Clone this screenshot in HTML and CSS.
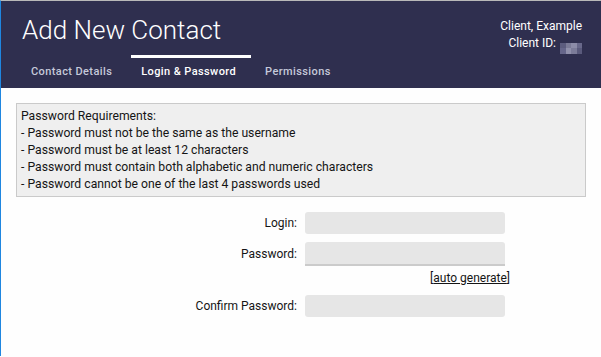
FILE: index.html
```html
<!DOCTYPE html>
<html lang="en">
<head>
  <meta charset="UTF-8">
  <title>Add New Contact</title>
  <link rel="stylesheet" href="styles.css">
</head>
<body>
  <header class="page-header">
    <div class="header-top">
      <h1>Add New Contact</h1>
      <div class="client-info">
        <div>Client, Example</div>
        <div>Client ID: <span class="blurred"><i></i><i></i><i></i><i></i><i></i><i></i><i></i><i></i></span></div>
      </div>
    </div>
    <nav class="tabs">
      <a class="tab">Contact Details</a>
      <a class="tab active">Login &amp; Password</a>
      <a class="tab">Permissions</a>
    </nav>
  </header>

  <div class="content">
    <div class="requirements">
      <div>Password Requirements:</div>
      <div>- Password must not be the same as the username</div>
      <div>- Password must be at least 12 characters</div>
      <div>- Password must contain both alphabetic and numeric characters</div>
      <div>- Password cannot be one of the last 4 passwords used</div>
    </div>

    <form class="login-form">
      <div class="row">
        <label for="login">Login:</label>
        <input type="text" id="login">
      </div>
      <div class="row row-tight">
        <label for="password">Password:</label>
        <input type="password" id="password" class="with-bar">
      </div>
      <div class="auto-row">[<a href="#">auto generate</a>]</div>
      <div class="row">
        <label for="confirm">Confirm Password:</label>
        <input type="password" id="confirm">
      </div>
    </form>
  </div>
</body>
</html>
```

FILE: styles.css
```css
body {
  margin: 0;
  border-top: 1px solid #b9b9b9;
  border-left: 1px solid #1f86e0;
  min-height: 356px;
  box-sizing: border-box;
  background: #fefefe;
  font-family: Roboto, 'Liberation Sans', sans-serif;
  color: #1c1c1c;
}

.page-header {
  background: #2f2f4f;
  height: 87px;
  box-sizing: border-box;
  padding-top: 13px;
}

.header-top {
  display: flex;
  justify-content: space-between;
  align-items: flex-start;
  height: 32px;
  padding: 0 19px 0 21px;
}

.header-top h1 {
  margin: 0;
  font-size: 26px;
  line-height: 32px;
  font-weight: 300;
  color: #fff;
}

.client-info {
  margin-top: 4px;
  text-align: right;
  font-size: 12px;
  line-height: 17px;
  color: #fff;
}

.blurred {
  display: inline-grid;
  grid-template-columns: repeat(4, 5.5px);
  grid-template-rows: repeat(2, 5.5px);
  vertical-align: -1px;
  margin-left: 1px;
}

.blurred i:nth-child(1) { background: #5c5c7e; }
.blurred i:nth-child(2) { background: #7a7a96; }
.blurred i:nth-child(3) { background: #8c8ca8; }
.blurred i:nth-child(4) { background: #68688a; }
.blurred i:nth-child(5) { background: #66668a; }
.blurred i:nth-child(6) { background: #9090ab; }
.blurred i:nth-child(7) { background: #7c7c99; }
.blurred i:nth-child(8) { background: #5a5a7c; }

.tabs {
  display: flex;
  gap: 4px;
  margin-top: 9px;
  padding-left: 20px;
}

.tab {
  padding: 7px 15px 9px 10px;
  border-top: 3px solid transparent;
  font-size: 11px;
  line-height: 14px;
  font-weight: 500;
  letter-spacing: 0.4px;
  color: #c6c9da;
}

.tab.active {
  border-top-color: #fff;
  color: #fff;
}

.content {
  padding: 15px 15px 0;
}

.requirements {
  border: 1px solid #cacaca;
  background: #efefef;
  padding: 4px 5px 3px 4px;
  font-size: 12.2px;
  line-height: 17px;
  color: #151515;
}

.login-form {
  margin-top: 15px;
  margin-left: -15px;
  font-size: 12px;
  color: #151515;
}

.row {
  display: flex;
  align-items: center;
  margin-bottom: 8px;
}

.row-tight {
  margin-bottom: 4px;
}

.row label {
  width: 296px;
  margin-right: 8px;
  text-align: right;
  line-height: 17px;
}

.row input {
  width: 200px;
  height: 22px;
  box-sizing: border-box;
  border: none;
  border-radius: 3px;
  background: #e6e6e6;
  margin: 0;
}

.row input.with-bar {
  height: 24px;
  border-bottom: 2px solid #cbcbcb;
  border-radius: 3px 3px 0 0;
}

.auto-row {
  width: 509px;
  margin-bottom: 8px;
  text-align: right;
  line-height: 17px;
}

.auto-row a {
  color: #151515;
}
```
